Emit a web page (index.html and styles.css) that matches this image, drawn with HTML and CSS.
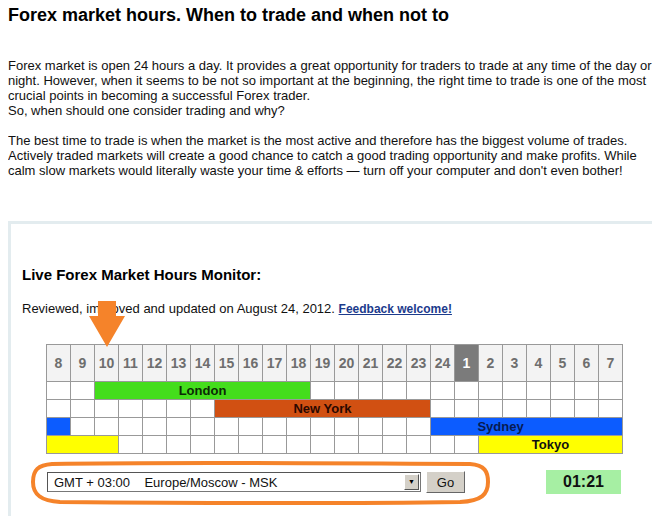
FILE: index.html
```html
<!DOCTYPE html>
<html lang="en">
<head>
    <meta charset="UTF-8">
    <meta name="viewport" content="width=device-width, initial-scale=1.0">
    <title>Forex market hours</title>
    <link rel="stylesheet" href="styles.css">
</head>
<body>
    <div class="page">
    <h1 class="title">Forex market hours. When to trade and when not to</h1>
    <div class="intro">
    <p>Forex market is open 24 hours a day. It provides a great opportunity for traders to trade at any time of the day or night. However, when it seems to be not so important at the beginning, the right time to trade is one of the most crucial points in becoming a successful Forex trader.<br>So, when should one consider trading and why?</p>
    <p>The best time to trade is when the market is the most active and therefore has the biggest volume of trades. Actively traded markets will create a good chance to catch a good trading opportunity and make profits. While calm slow markets would literally waste your time &amp; efforts &mdash; turn off your computer and don't even bother!</p>
    </div>

    <div class="monitor">
    <h2 class="monitor-title">Live Forex Market Hours Monitor:</h2>
    <p class="reviewed">Reviewed, improved and updated on August 24, 2012. <a href="#">Feedback welcome!</a></p>

    <div class="hours-wrap">
    <svg class="now-arrow" width="36" height="46" viewBox="0 0 36 46">
        <polygon points="9,0 27,0 27,15 36,15 18,46 0,15 9,15" fill="#f5832a"/>
    </svg>
    <table class="hours">
        <tr class="hrow">
            <th>8</th><th>9</th><th>10</th><th>11</th><th>12</th><th>13</th><th>14</th><th>15</th>
            <th>16</th><th>17</th><th>18</th><th>19</th><th>20</th><th>21</th><th>22</th><th>23</th>
            <th>24</th><th class="cur">1</th><th>2</th><th>3</th><th>4</th><th>5</th><th>6</th><th>7</th>
        </tr>
        <tr>
            <td></td><td></td>
            <td colspan="9" class="london">London</td>
            <td></td><td></td><td></td><td></td><td></td><td></td><td></td><td></td><td></td><td></td><td></td><td></td><td></td>
        </tr>
        <tr>
            <td></td><td></td><td></td><td></td><td></td><td></td><td></td>
            <td colspan="9" class="newyork">New York</td>
            <td></td><td></td><td></td><td></td><td></td><td></td><td></td><td></td>
        </tr>
        <tr>
            <td class="sydney"></td>
            <td></td><td></td><td></td><td></td><td></td><td></td><td></td><td></td><td></td><td></td><td></td><td></td><td></td><td></td><td></td>
            <td colspan="8" class="sydney sydney-label">Sydney</td>
        </tr>
        <tr>
            <td colspan="3" class="tokyo"></td>
            <td></td><td></td><td></td><td></td><td></td><td></td><td></td><td></td><td></td><td></td><td></td><td></td><td></td><td></td><td></td>
            <td colspan="6" class="tokyo">Tokyo</td>
        </tr>
    </table>
    </div>

    <div class="tz-row">
        <svg class="tz-ring" width="461" height="46" viewBox="0 0 461 46">
            <path d="M22,4 C120,2 300,3 440,4 C455,5 458,12 458,22 C458,34 452,41 430,42 C300,44 150,43 30,42 C10,41 3,34 3,22 C3,10 8,5 22,4 Z" fill="none" stroke="#f5832a" stroke-width="4"/>
        </svg>
        <div class="tz-select">
            <span class="tz-text">GMT + 03:00&nbsp;&nbsp;&nbsp;&nbsp;Europe/Moscow - MSK</span>
            <span class="tz-drop">&#9660;</span>
        </div>
        <button class="go-btn">Go</button>
        <div class="clock">01:21</div>
    </div>
    </div>
    </div>
</body>
</html>
```

FILE: styles.css
```css
body{
    margin: 4px 8px 0 8px;
    font-family: "Liberation Sans", Arial, sans-serif;
    color: #111;
    background: #fff;
    overflow: hidden;
}
.page{
    width: 644px;
    overflow: hidden;
}
.title{
    margin: 0;
    font-size: 18px;
    line-height: 22px;
    font-weight: bold;
    color: #000;
}
.intro{
    width: 655px;
    margin-top: 32px;
}
.intro p{
    margin: 0 0 15px 0;
    font-size: 13px;
    line-height: 15px;
}
.monitor{
    margin-top: 43px;
    width: 660px;
    border-top: 3px solid #e3ecef;
    border-left: 3px solid #e3ecef;
    padding: 42px 0 30px 11px;
}
.monitor-title{
    margin: 0;
    font-size: 15px;
    line-height: 18px;
    font-weight: bold;
    color: #000;
}
.reviewed{
    margin: 17px 0 0 0;
    font-size: 13px;
    line-height: 15px;
}
.reviewed a{
    color: #1c3b8c;
    font-weight: bold;
    font-size: 12px;
}
.hours-wrap{
    position: relative;
    margin: 27px 0 0 24px;
    width: 577px;
}
.now-arrow{
    position: absolute;
    left: 43px;
    top: -43px;
}
.hours{
    border-collapse: collapse;
    table-layout: fixed;
}
.hours th,
.hours td{
    border: 1px solid #999;
    width: 23px;
    padding: 0;
    text-align: center;
    font-size: 13px;
    font-weight: bold;
}
.hours th{
    height: 36px;
    background: #f3f3f3;
    color: #6e6e6e;
    font-size: 14px;
}
.hours th.cur{
    background: #7b7b7b;
    color: #fff;
}
.hours td{
    height: 17px;
    line-height: 15px;
}
.london{
    background: #44dd1c;
    color: #0b2a05;
}
.newyork{
    background: #d15012;
    color: #2a0800;
}
.sydney{
    background: #0c5cff;
    color: #071a52;
}
.sydney-label{
    padding-right: 52px !important;
}
.tokyo{
    background: #ffff00;
    color: #111;
}
.tz-row{
    position: relative;
    display: flex;
    align-items: center;
    margin: 16px 0 0 25px;
    height: 24px;
}
.tz-ring{
    position: absolute;
    left: -17px;
    top: -10px;
}
.tz-select{
    display: flex;
    align-items: center;
    width: 372px;
    height: 18px;
    border: 1px solid #777;
    border-top-color: #555;
    border-left-color: #555;
    background: #fff;
    font-size: 13px;
    justify-content: space-between;
}
.tz-text{
    padding-left: 6px;
}
.tz-drop{
    width: 15px;
    height: 16px;
    margin-right: 1px;
    background: #d4d0c8;
    border: 1px solid #fff;
    border-right-color: #555;
    border-bottom-color: #555;
    box-sizing: border-box;
    font-size: 7px;
    line-height: 14px;
    text-align: center;
    color: #000;
}
.go-btn{
    margin-left: 5px;
    width: 39px;
    height: 22px;
    background: #d4d0c8;
    border: 1px solid #fff;
    border-right-color: #666;
    border-bottom-color: #666;
    font-family: "Liberation Sans", Arial, sans-serif;
    font-size: 13px;
    color: #111;
    padding: 0;
}
.clock{
    margin-left: 81px;
    width: 75px;
    height: 24px;
    line-height: 24px;
    background: #a6efa3;
    text-align: center;
    font-size: 16px;
    font-weight: bold;
    color: #111;
}
```
